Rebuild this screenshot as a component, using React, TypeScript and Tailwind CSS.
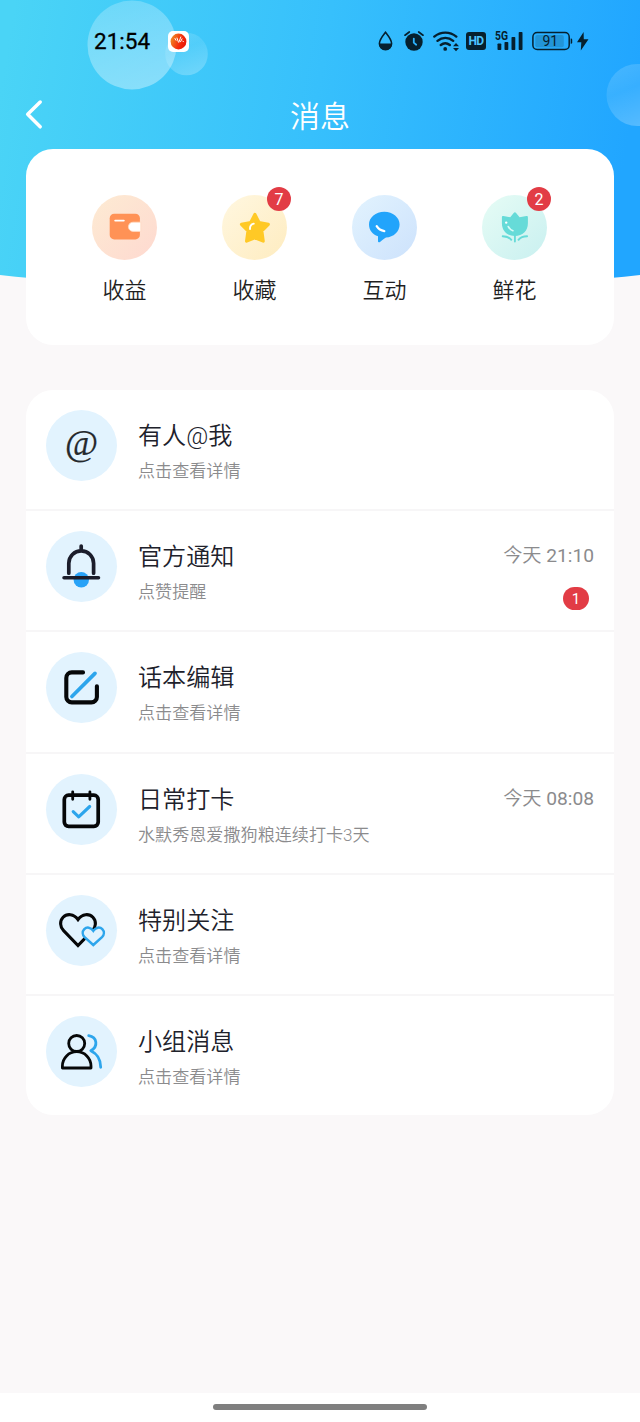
import type { ReactNode } from "react";

/* ─── Quick entry icons (65 x 65) ─── */
const WalletIcon = () => (
    <svg viewBox="0 0 65 65" className="w-full h-full" fill="none">
        <rect x="17.7" y="18.7" width="30.2" height="25.7" rx="4.5" fill="#ff9256" />
        <path d="M48.8 27.2H41a4.6 4.6 0 0 0 0 9.2h7.8z" fill="#fff" stroke="#ffd9c2" strokeWidth="0.8" />
        <path d="M23.2 25.6h8.6" stroke="#fff" strokeWidth="1.9" strokeLinecap="round" />
    </svg>
);

const StarIcon = () => (
    <svg viewBox="0 0 65 65" className="w-full h-full" fill="none">
        <path
            d="M32.9 19.4l4.1 8.1 9.3 1.8-6.5 6.6 1.4 10.2-8.3-3.3-8.3 3.3 1.4-10.2-6.5-6.6 9.3-1.8z"
            fill="#ffc926" stroke="#ffc926" strokeWidth="3.2" strokeLinejoin="round"
        />
        <path d="M28 34c-.2-2.8 1-4.6 3.8-5.3" stroke="#fff" strokeWidth="1.9" strokeLinecap="round" />
    </svg>
);

const ChatIcon = () => (
    <svg viewBox="0 0 65 65" className="w-full h-full" fill="none">
        <path
            d="M32.3 16.7c8.6 0 15.3 5.7 15.3 12.9S41.5 42.3 34 42.6c-1.5.6-3.4 2.3-6 4.4-.8.6-2 .2-2-.7v-5C20.5 39.5 17 35.2 17 29.6c0-7.2 6.7-12.9 15.3-12.9z"
            fill="#22a4fb"
        />
        <path d="M24.7 31.2c1.7 2.7 4.2 4.4 7.6 4.9" stroke="#fff" strokeWidth="2.3" strokeLinecap="round" />
    </svg>
);

const FlowerIcon = () => (
    <svg viewBox="0 0 65 65" className="w-full h-full" fill="none">
        <path
            d="M32.9 17.2c.5 0 .8.3 1.2.8l3.5 4.2 6.8-1.1c.9-.2 1.5.3 1.5 1.2v6C45.9 36 40.5 41 32.9 41S19.9 36 19.9 28.3v-6c0-.9.6-1.4 1.5-1.2l6.8 1.1 3.5-4.2c.4-.5.7-.8 1.2-.8z"
            fill="#66dbd8"
        />
        <path d="M32.9 40v6.500M20.7 41.2c4.2 0 6.6 1 8.6 3.6M45.1 41.2c-4.2 0-6.6 1-8.6 3.6" stroke="#66dbd8" strokeWidth="1.9" strokeLinecap="round" />
        <circle cx="24.2" cy="27.6" r="1.2" fill="#fff" />
        <path d="M26.3 31.6c1.2 2.2 2.5 3.3 4.6 4.1" stroke="#d8fbf7" strokeWidth="1.7" strokeLinecap="round" />
    </svg>
);

/* ─── List icons (71 x 71) ─── */
const BellIcon = () => (
    <svg viewBox="0 0 71 71" className="w-full h-full" fill="none" strokeLinecap="round">
        <circle cx="35.3" cy="48.7" r="7.7" fill="#28a2f7" />
        <path d="M22.8 42.2V32.3a12.4 12.4 0 0 1 24.8 0v9.9M35.2 15v4" stroke="#1b1d2b" strokeWidth="3.7" />
        <path d="M18 46.7h34.5" stroke="#1b1d2b" strokeWidth="3.5" />
    </svg>
);

const EditIcon = () => (
    <svg viewBox="0 0 71 71" className="w-full h-full" fill="none" strokeLinecap="round">
        <path d="M37 20.4H25.8a5.5 5.5 0 0 0-5.5 5.5v19a5.5 5.5 0 0 0 5.5 5.5h19.6a5.5 5.5 0 0 0 5.5-5.5V34.3" stroke="#060708" strokeWidth="4.1" />
        <path d="M49 21.4L25.9 44.5" stroke="#2da5ec" strokeWidth="3.7" />
    </svg>
);

const CalendarIcon = () => (
    <svg viewBox="0 0 71 71" className="w-full h-full" fill="none" strokeLinecap="round">
        <rect x="18.3" y="21.2" width="33.9" height="31.2" rx="4.3" stroke="#060708" strokeWidth="3.7" />
        <path d="M26.7 17.8v7.5M43.9 17.8v7.5" stroke="#060708" strokeWidth="2.8" />
        <path d="M27.2 37.6l5.5 5.2 11-10.3" stroke="#2da5ec" strokeWidth="3.1" strokeLinejoin="round" />
    </svg>
);

const HeartsIcon = () => (
    <svg viewBox="0 0 71 71" className="w-full h-full" fill="none">
        <path
            d="M32 24.5c-4.3-5.9-11.1-6.2-14.9-2.2-3.6 3.8-3.2 9.6.5 13.4L32 50.5l14.4-14.8c3.7-3.8 4.1-9.6.5-13.4-3.8-4-10.6-3.7-14.9 2.2z"
            stroke="#060708" strokeWidth="3.1"
        />
        <path
            d="M47.3 35.8c-2.6-3.8-6.7-4-9-1.6-2.2 2.3-2 5.7.3 8l8.7 7.8 8.7-7.8c2.3-2.3 2.5-5.7.3-8-2.3-2.4-6.4-2.2-9 1.6z"
            fill="#e2f3fe" stroke="#2da5ec" strokeWidth="2.5"
        />
    </svg>
);

const GroupIcon = () => (
    <svg viewBox="0 0 71 71" className="w-full h-full" fill="none">
        <circle cx="30.7" cy="27.5" r="8" stroke="#060708" strokeWidth="2.8" />
        <path d="M16.4 52v-2a14.3 14.3 0 0 1 28.6 0v2z" stroke="#060708" strokeWidth="2.8" strokeLinejoin="round" />
        <path d="M42.7 19.7c8.5 1.3 9.8 10.8 2.1 15 6.4 3 9.9 8.5 9.9 16.6" stroke="#2da5ec" strokeWidth="2.8" strokeLinecap="round" strokeLinejoin="round" />
    </svg>
);

const AtIcon = () => (
    <span className="font-['Liberation_Serif'] font-normal text-[36px] leading-none text-[#25292d] -mt-[5px] [-webkit-text-stroke:0.2px]">@</span>
);

/* ─── Data ─── */
const ENTRIES: { label: string; icon: ReactNode; bg: string; badge?: number }[] = [
    { label: "收益", icon: <WalletIcon />, bg: "from-[#fdebd3] to-[#fed9d0]" },
    { label: "收藏", icon: <StarIcon />,   bg: "from-[#fff7e0] to-[#feecc0]", badge: 7 },
    { label: "互动", icon: <ChatIcon />,   bg: "from-[#e2f3fe] to-[#cde2fc]" },
    { label: "鲜花", icon: <FlowerIcon />, bg: "from-[#e6fcf5] to-[#c9f0f0]", badge: 2 },
];

const MESSAGES: { title: string; desc: string; icon: ReactNode; time?: string; unread?: number }[] = [
    { title: "有人@我",   desc: "点击查看详情", icon: <AtIcon /> },
    { title: "官方通知", desc: "点赞提醒", icon: <BellIcon />, time: "21:10", unread: 1 },
    { title: "话本编辑", desc: "点击查看详情", icon: <EditIcon /> },
    { title: "日常打卡", desc: "水默秀恩爱撒狗粮连续打卡3天", icon: <CalendarIcon />, time: "08:08" },
    { title: "特别关注", desc: "点击查看详情", icon: <HeartsIcon /> },
    { title: "小组消息", desc: "点击查看详情", icon: <GroupIcon /> },
];

function HeaderBackground() {
    return (
        <svg className="absolute top-0 left-0" width="640" height="290" viewBox="0 0 640 290" fill="none">
            <defs>
                <linearGradient id="sky" gradientUnits="userSpaceOnUse" x1="0" y1="90" x2="620" y2="190">
                    <stop offset="0" stopColor="#4ad4f6" />
                    <stop offset="0.5" stopColor="#37c0fc" />
                    <stop offset="1" stopColor="#21a6ff" />
                </linearGradient>
                <linearGradient id="bubble" x1="0.3" y1="0" x2="0.6" y2="1">
                    <stop offset="0" stopColor="#fff" stopOpacity="0.22" />
                    <stop offset="0.3" stopColor="#fff" stopOpacity="0.27" />
                    <stop offset="1" stopColor="#fff" stopOpacity="0.37" />
                </linearGradient>
                <linearGradient id="bubbleSoft" x1="0.2" y1="0" x2="0.6" y2="1">
                    <stop offset="0" stopColor="#fff" stopOpacity="0.16" />
                    <stop offset="0.4" stopColor="#fff" stopOpacity="0.1" />
                    <stop offset="1" stopColor="#fff" stopOpacity="0.24" />
                </linearGradient>
            </defs>
            <path d="M0 0H640V275Q610 279 570 280H70Q30 279 0 275Z" fill="url(#sky)" />
            <circle cx="186.5" cy="54" r="21.3" fill="url(#bubbleSoft)" />
            <circle cx="132" cy="45" r="44.5" fill="url(#bubble)" />
            <circle cx="637.5" cy="95" r="31" fill="url(#bubbleSoft)" />
        </svg>
    );
}

function StatusBar() {
    return (
        <div className="relative flex items-center h-[82px] pl-[94px] pr-[51px] text-[#06202e]">
            <span className="w-[58px] pt-px font-['Roboto'] font-normal text-[22.5px] leading-none text-black [-webkit-text-stroke:0.3px]">21:54</span>
            <span className="ml-[16px] w-[21px] h-[21px] rounded-[5px] bg-white flex items-center justify-center">
                <svg width="17" height="17" viewBox="0 0 17 17" fill="none">
                    <defs>
                        <linearGradient id="app" x1="0" y1="0.3" x2="1" y2="0.7">
                            <stop offset="0" stopColor="#f08a24" />
                            <stop offset="0.6" stopColor="#f42c0c" />
                            <stop offset="1" stopColor="#e81508" />
                        </linearGradient>
                    </defs>
                    <circle cx="8.5" cy="8.5" r="7.9" fill="url(#app)" />
                    <path d="M5 5.500l1 1.800M7 5l1.200 3.500M8.800 9.300L10.800 4M10.500 8.800l1.500-3M12.700 8l.8.8" stroke="#fff" strokeWidth="1" strokeLinecap="round" />
                </svg>
            </span>
            <div className="flex items-center ml-auto">
                {/* eye comfort */}
                <svg width="15" height="20" viewBox="0 0 15 20" fill="none">
                    <path d="M7.5 1.3C9.8 4.2 13.6 8.6 13.6 12.6a6.1 6.1 0 0 1-12.2 0C1.4 8.6 5.2 4.2 7.5 1.3z" stroke="currentColor" strokeWidth="1.6" />
                    <path d="M1 12.5h13c0 3.8-3 6.6-6.5 6.6S1 16.3 1 12.5z" fill="currentColor" />
                </svg>
                {/* alarm */}
                <svg className="ml-[11px]" width="20" height="20" viewBox="0 0 20 20" fill="none">
                    <circle cx="10" cy="11" r="8.7" fill="currentColor" />
                    <path d="M1 4.2L5.3 1M19 4.2L14.7 1" stroke="currentColor" strokeWidth="1.7" strokeLinecap="round" />
                    <path d="M9.8 7.6v4l2.4 2.1" stroke="#2db3fd" strokeWidth="1.8" strokeLinecap="round" />
                </svg>
                {/* wifi */}
                <svg className="ml-[9px]" width="27" height="21" viewBox="0 0 27 21" fill="none">
                    <path d="M1.3 5.6c6.4-5.3 15.6-5.3 22 0M4.5 9.8c4.7-3.9 11-3.9 15.7 0M7.8 14c2.7-2.2 6.3-2.2 9 0" stroke="currentColor" strokeWidth="2.4" strokeLinecap="round" />
                    <circle cx="12.2" cy="17.9" r="1.9" fill="currentColor" />
                    <path d="M20 15.3l3-3.3 3 3.3zM20 16.9l3 3.3 3-3.3z" fill="currentColor" />
                </svg>
                <span className="ml-[6px] w-[20px] h-[18px] rounded-[3px] bg-[#06202e] text-[#4cc4ff] font-['Roboto'] font-bold text-[12px] tracking-[-0.6px] leading-[19px] text-center">HD</span>
                {/* 5G signal */}
                <svg className="ml-[9px]" width="29" height="22" viewBox="0 0 29 22" fill="currentColor">
                    <text x="0" y="10.2" fontFamily="Roboto" fontWeight="700" fontSize="12" textLength="13" lengthAdjust="spacingAndGlyphs">5G</text>
                    <rect x="2.5" y="13.5" width="3.8" height="6.5" rx="0.8" />
                    <rect x="9.5" y="12" width="3.8" height="8" rx="0.8" />
                    <rect x="16.5" y="7" width="3.8" height="13" rx="0.8" />
                    <rect x="23.7" y="2" width="3.8" height="18" rx="0.8" />
                </svg>
                {/* battery */}
                <svg className="ml-[8px]" width="41" height="20" viewBox="0 0 41 20" fill="none">
                    <rect x="0.9" y="1.6" width="36.3" height="17" rx="4.3" stroke="currentColor" strokeWidth="1.5" />
                    <rect x="3.3" y="4" width="28.5" height="12.2" rx="2" fill="#2295d8" />
                    <path d="M38.7 7.500h.3a1.200 1.200 0 0 1 1.200 1.200v2.800a1.200 1.200 0 0 1-1.200 1.200h-.3z" fill="currentColor" />
                    <text x="18.3" y="15" textAnchor="middle" fontFamily="Roboto" fontWeight="400" fontSize="14" fill="currentColor">91</text>
                </svg>
                <svg className="ml-[3px]" width="13" height="20" viewBox="0 0 13 20" fill="currentColor">
                    <path d="M7.6 1L1 11.2h4.3L4.8 19.4 12.5 8.2H7.8z" />
                </svg>
            </div>
        </div>
    );
}

export default function App() {
    return (
        <div className="relative flex flex-col w-[640px] h-[1422px] overflow-hidden bg-[#faf8f9] font-['Roboto','Noto_Sans_CJK_SC',sans-serif] font-[350]">
            <HeaderBackground />
            <StatusBar />

            {/* ── Title bar ── */}
            <header className="relative flex items-center justify-center h-[67px] text-white">
                <svg className="absolute left-[24px] top-[17px]" width="20" height="31" viewBox="0 0 20 31" fill="none">
                    <path d="M16.2 3L3.7 15.3l12.5 12.5" stroke="#fff" strokeWidth="3.5" strokeLinecap="round" strokeLinejoin="round" />
                </svg>
                <h1 className="pt-[2px] text-[30px] leading-none">消息</h1>
            </header>

            {/* ── Quick entries ── */}
            <section className="relative mx-[26px] h-[196px] rounded-[27px] bg-white px-[33.4px] pt-[46px] flex shrink-0">
                {ENTRIES.map(({ label, icon, bg, badge }) => (
                    <div key={label} className="w-[130px] flex flex-col items-center">
                        <div className={`relative w-[65px] h-[65px] rounded-full bg-linear-to-br ${bg}`}>
                            {icon}
                            {badge && (
                                <span className="absolute -top-[8px] -right-[4px] w-[24px] h-[24px] rounded-full bg-[#e23c45] text-white text-[16px] font-normal leading-[25px] text-center">
                                    {badge}
                                </span>
                            )}
                        </div>
                        <span className="mt-[15px] text-[22px] leading-[32px] text-[#1f1f1f]">{label}</span>
                    </div>
                ))}
            </section>

            {/* ── Messages ── */}
            <section className="mx-[26px] mt-[45px] rounded-[27px] bg-white overflow-hidden shrink-0">
                {MESSAGES.map(({ title, desc, icon, time, unread }) => (
                    <div key={title} className="h-[121.2px] last:h-[119.5px] border-b-2 last:border-b-0 border-[#f7f6f7] flex pt-[20px] pl-[20px] pr-[20px]">
                        <div className="w-[71px] h-[71px] rounded-full bg-[#e2f3fe] flex items-center justify-center shrink-0">
                            {icon}
                        </div>
                        <div className="ml-[21px] pt-[9px] flex-1">
                            <h2 className="text-[24.1px] leading-[34px] text-[#20212b]">{title}</h2>
                            <p className="mt-[6px] text-[17.1px] leading-[24px] text-[#8b8b8d]">{desc}</p>
                        </div>
                        {time && (
                            <div className="pt-[11px] flex flex-col items-end">
                                <span className="text-[19.2px] leading-[28px] text-[#8b8b8d]">
                                    今天 <span className="font-normal">{time}</span>
                                </span>
                                {unread && (
                                    <span className="mt-[17px] mr-[5px] w-[26px] h-[23px] rounded-full bg-[#e23c45] text-white text-[15px] font-normal leading-[24px] text-center">
                                        {unread}
                                    </span>
                                )}
                            </div>
                        )}
                    </div>
                ))}
            </section>

            {/* ── Gesture bar ── */}
            <footer className="mt-auto h-[29px] bg-white flex justify-center pt-[11px] shrink-0">
                <div className="w-[214px] h-[6px] rounded-full bg-[#7f7f7f]" />
            </footer>
        </div>
    );
}
